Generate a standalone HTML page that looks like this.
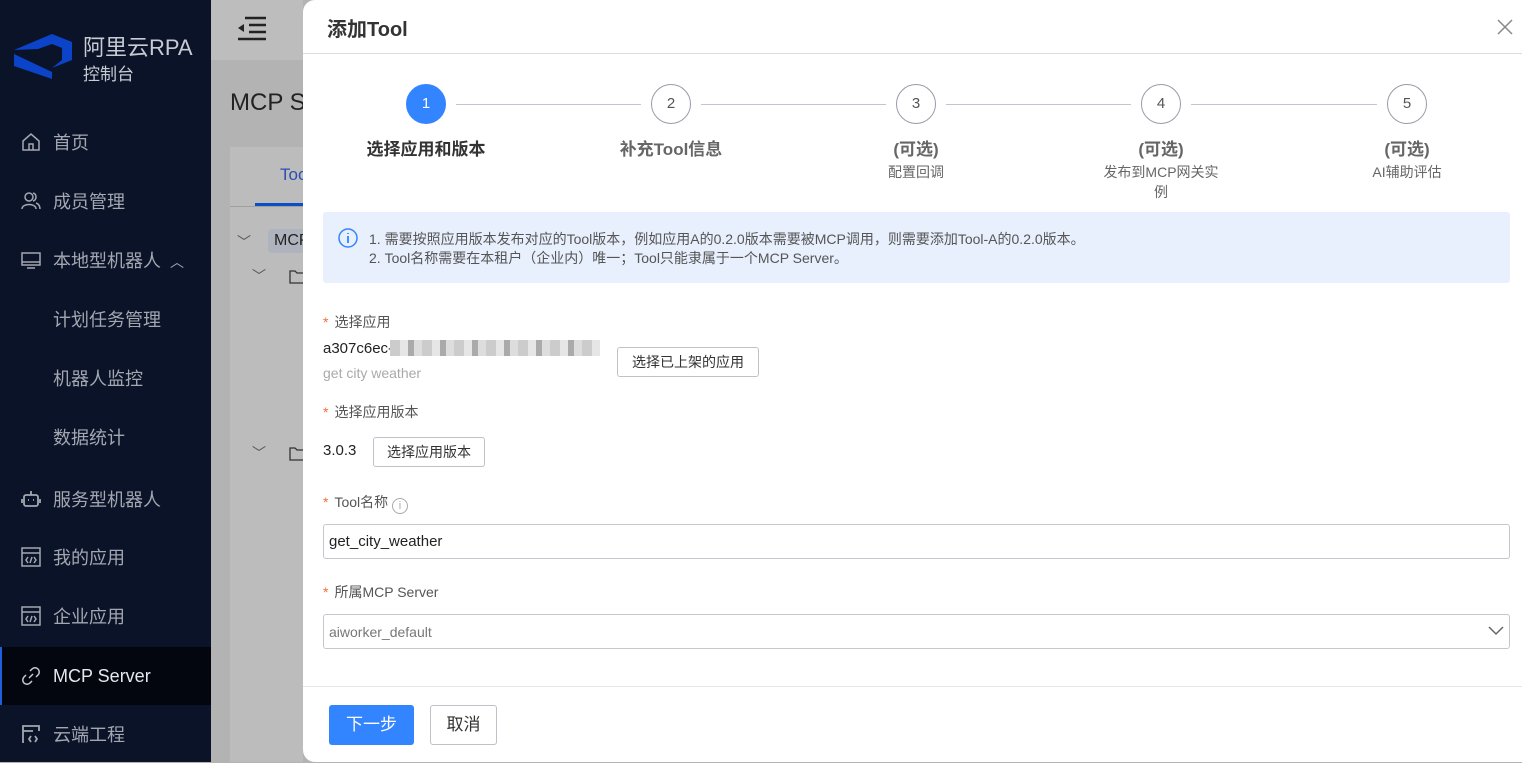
<!DOCTYPE html>
<html><head><meta charset="utf-8"><style>
*{box-sizing:border-box;margin:0;padding:0}
body{width:1522px;height:762px;overflow:hidden;position:relative;font-family:"Liberation Sans","Noto Sans CJK SC",sans-serif;background:#b3b3b3}
.abs{position:absolute}
#side{left:0;top:0;width:211px;height:762px;background:#0b1329}
.item{position:absolute;left:0;width:211px;height:58px;color:#a3a7b0;font-size:18px;display:flex;align-items:center}
.item svg{position:absolute;left:21px}
.item span{position:absolute;left:53px;white-space:nowrap}
#main{left:211px;top:0;width:92px;height:762px;overflow:hidden;white-space:nowrap}
#modal{left:303px;top:0;width:1219px;height:762px;background:#fff;border-top-left-radius:12px;border-bottom-left-radius:12px}
.circ{position:absolute;width:40px;height:40px;border-radius:50%;border:1px solid #9a9aa8;color:#555;font-size:15px;text-align:center;line-height:38px;background:#fff}
.line{position:absolute;top:104px;height:1px;background:#c4c4d0}
.st{position:absolute;width:200px;text-align:center;font-weight:bold;font-size:17px;color:#666}
.sub{position:absolute;width:130px;text-align:center;font-size:14px;color:#666;line-height:20px}
.lbl{position:absolute;left:323px;font-size:14px;color:#555}
.lbl b{color:#f56c3c;font-weight:normal;margin-right:6px}
.btn{position:absolute;border:1px solid #c0c0c8;border-radius:3px;background:#fff;font-size:14px;color:#333;text-align:center}
</style></head><body>
<div id="side" class="abs">
 <svg class="abs" style="left:14px;top:32px" width="58" height="48" viewBox="0 0 58 48"><path d="M0 18 L38 2 L58 10 L58 28 L38 36 L48 28 L48 16 Z" fill="#0b44c9"/><path d="M0 22 L0 34 L38 47 L38 40 Z" fill="#0b44c9"/><path d="M10 22 L38 12 L48 16 L20 24 Z" fill="#0b1329"/></svg>
 <div class="abs" style="left:83px;top:30px;color:#c8cbd2;font-size:22px">阿里云RPA</div>
 <div class="abs" style="left:83px;top:60px;color:#c8cbd2;font-size:17px">控制台</div>
 <div class="item" style="top:113px"><svg width="20" height="20" viewBox="0 0 20 20" fill="none" stroke="#a3a7b0" stroke-width="1.5"><path d="M2 9 L10 2 L18 9 V18 H2 Z M8 18 V12 H12 V18"/></svg><span>首页</span></div>
 <div class="item" style="top:172px"><svg width="20" height="20" viewBox="0 0 20 20" fill="none" stroke="#a3a7b0" stroke-width="1.5"><circle cx="8" cy="6" r="4"/><path d="M1 18 C1 12 15 12 15 18 M12 2 C16 3 16 9 12 10 M15 12 C18 13 19 15 19 18"/></svg><span>成员管理</span></div>
 <div class="item" style="top:231px"><svg width="20" height="20" viewBox="0 0 20 20" fill="none" stroke="#a3a7b0" stroke-width="1.5"><rect x="1" y="3" width="18" height="12"/><path d="M1 12 H19 M6 18 H14"/></svg><span>本地型机器人 <small style="font-size:14px;margin-left:4px">︿</small></span></div>
 <div class="item" style="top:290px"><span>计划任务管理</span></div>
 <div class="item" style="top:349px"><span>机器人监控</span></div>
 <div class="item" style="top:408px"><span>数据统计</span></div>
 <div class="item" style="top:470px"><svg width="20" height="20" viewBox="0 0 20 20" fill="none" stroke="#a3a7b0" stroke-width="1.8"><rect x="3" y="6" width="14" height="11" rx="2"/><path d="M10 2 V6 M7 11 H8 M12 11 H13 M1 10 V14 M19 10 V14"/></svg><span>服务型机器人</span></div>
 <div class="item" style="top:528px"><svg width="20" height="20" viewBox="0 0 20 20" fill="none" stroke="#a3a7b0" stroke-width="1.5"><rect x="1" y="1" width="18" height="18"/><path d="M1 6 H19 M7 10 L5 13 L7 16 M13 10 L15 13 L13 16 M11 10 L9 16"/></svg><span>我的应用</span></div>
 <div class="item" style="top:587px"><svg width="20" height="20" viewBox="0 0 20 20" fill="none" stroke="#a3a7b0" stroke-width="1.5"><rect x="1" y="1" width="18" height="18"/><path d="M1 6 H19 M7 10 L5 13 L7 16 M13 10 L15 13 L13 16 M11 10 L9 16"/></svg><span>企业应用</span></div>
 <div class="item" style="top:647px;background:#03060f;color:#e6e8ec;border-left:2px solid #1e5fe0"><svg width="20" height="20" viewBox="0 0 20 20" fill="none" stroke="#c8cbd2" stroke-width="1.5" style="left:19px"><path d="M8 12 L12 8 M9 5 L11 3 A3 3 0 0 1 17 9 L15 11 M11 15 L9 17 A3 3 0 0 1 3 11 L5 9"/></svg><span style="left:51px">MCP Server</span></div>
 <div class="item" style="top:705px"><svg width="20" height="20" viewBox="0 0 20 20" fill="none" stroke="#a3a7b0" stroke-width="1.8"><path d="M2 19 V2 H18 V7 M2 7 H12 M10 12 L8 15 L10 18 M14 12 L16 15 L14 18"/></svg><span>云端工程</span></div>
</div>
<div id="main" class="abs">
 <div class="abs" style="left:0;top:0;width:92px;height:60px;background:#bdbdbd"></div>
 <svg class="abs" style="left:26px;top:16px" width="30" height="26" viewBox="0 0 30 26" stroke="#222" stroke-width="2.5"><path d="M8 2 H29 M12 9 H29 M12 16 H29 M1 23 H29"/><path d="M1 12 L7 8 V16 Z" fill="#222" stroke="none"/></svg>
 <div class="abs" style="left:19px;top:89px;font-size:24px;color:#222">MCP Server</div>
 <div class="abs" style="left:19px;top:147px;width:80px;height:615px;background:#bcbcbc"></div>
 <div class="abs" style="left:19px;top:206px;width:80px;height:1px;background:#a0a0a0"></div>
 <div class="abs" style="left:44px;top:203px;width:50px;height:3px;background:#0b4fc4"></div>
 <div class="abs" style="left:69px;top:165px;font-size:17px;color:#2a4fb0">Tool</div>
 <div class="abs" style="left:26px;top:232px;font-size:14px;color:#555">﹀</div>
 <div class="abs" style="left:57px;top:229px;width:60px;height:24px;background:#aeb3be;border-radius:4px;font-size:16px;color:#222;padding:3px 6px">MCP</div>
 <div class="abs" style="left:41px;top:266px;font-size:14px;color:#555">﹀</div>
 <div class="abs" style="left:41px;top:443px;font-size:14px;color:#555">﹀</div>
 <svg class="abs" style="left:78px;top:268px" width="16" height="16"><path d="M1 3 H6 L8 5 H15 V15 H1 Z" fill="none" stroke="#333" stroke-width="1.3"/></svg>
 <svg class="abs" style="left:78px;top:445px" width="16" height="16"><path d="M1 3 H6 L8 5 H15 V15 H1 Z" fill="none" stroke="#333" stroke-width="1.3"/></svg>
</div>
<div id="modal" class="abs">
 <div class="abs" style="left:24px;top:13px;font-size:20px;font-weight:bold;color:#333">添加Tool</div>
 <svg class="abs" style="left:1194px;top:19px" width="16" height="16" stroke="#888" stroke-width="1.5"><path d="M1 1 L15 15 M15 1 L1 15"/></svg>
 <div class="abs" style="left:0;top:53px;width:1219px;height:1px;background:#dcdce2"></div>
</div>
<div class="line" style="left:456px;width:185px"></div>
<div class="line" style="left:701px;width:185px"></div>
<div class="line" style="left:946px;width:185px"></div>
<div class="line" style="left:1191px;width:186px"></div>
<div class="circ" style="left:406px;top:84px;background:#3384ff;border-color:#3384ff;color:#fff">1</div>
<div class="circ" style="left:651px;top:84px">2</div>
<div class="circ" style="left:896px;top:84px">3</div>
<div class="circ" style="left:1141px;top:84px">4</div>
<div class="circ" style="left:1387px;top:84px">5</div>
<div class="st" style="left:326px;top:135px;color:#333">选择应用和版本</div>
<div class="st" style="left:571px;top:135px">补充Tool信息</div>
<div class="st" style="left:816px;top:135px">(可选)</div>
<div class="st" style="left:1061px;top:135px">(可选)</div>
<div class="st" style="left:1307px;top:135px">(可选)</div>
<div class="sub" style="left:851px;top:162px">配置回调</div>
<div class="sub" style="left:1096px;top:162px">发布到MCP网关实<br>例</div>
<div class="sub" style="left:1342px;top:162px">AI辅助评估</div>
<div class="abs" style="left:323px;top:212px;width:1187px;height:71px;background:#e8effd;border-radius:3px"></div>
<svg class="abs" style="left:338px;top:228px" width="20" height="20" viewBox="0 0 20 20"><circle cx="10" cy="10" r="9" fill="none" stroke="#3384ff" stroke-width="1.5"/><path d="M10 8 V15 M10 5 V6" stroke="#3384ff" stroke-width="1.8"/></svg>
<div class="abs" style="left:369px;top:230px;font-size:14px;color:#555;line-height:19px">1. 需要按照应用版本发布对应的Tool版本，例如应用A的0.2.0版本需要被MCP调用，则需要添加Tool-A的0.2.0版本。<br>2. Tool名称需要在本租户（企业内）唯一；Tool只能隶属于一个MCP Server。</div>
<div class="lbl" style="top:312px"><b>*</b>选择应用</div>
<div class="abs" style="left:323px;top:340px;font-size:15px;color:#222">a307c6ec-</div>
<div class="abs" style="left:390px;top:340px;width:210px;height:16px;background:repeating-linear-gradient(90deg,#ccc 0 10px,#e6e6e6 10px 18px,#aaa 18px 24px,#ddd 24px 32px)"></div>
<div class="abs" style="left:323px;top:365px;font-size:14px;color:#aaa">get city weather</div>
<div class="btn" style="left:617px;top:347px;width:142px;height:30px;line-height:28px">选择已上架的应用</div>
<div class="lbl" style="top:402px"><b>*</b>选择应用版本</div>
<div class="abs" style="left:323px;top:442px;font-size:15px;color:#222">3.0.3</div>
<div class="btn" style="left:373px;top:437px;width:112px;height:30px;line-height:28px">选择应用版本</div>
<div class="lbl" style="top:492px"><b>*</b>Tool名称 <span style="display:inline-block;width:16px;height:16px;border:1px solid #aaa;border-radius:50%;font-size:11px;text-align:center;line-height:14px;color:#aaa;vertical-align:-2px">i</span></div>
<div class="abs" style="left:323px;top:524px;width:1187px;height:35px;border:1px solid #c6c6ce;border-radius:3px;font-size:15px;color:#222;padding:8px 5px">get_city_weather</div>
<div class="lbl" style="top:582px"><b>*</b>所属MCP Server</div>
<div class="abs" style="left:323px;top:614px;width:1187px;height:35px;border:1px solid #c6c6ce;border-radius:3px;font-size:14px;color:#777;padding:9px 5px">aiworker_default</div>
<svg class="abs" style="left:1488px;top:625px" width="16" height="12" stroke="#666" stroke-width="1.5" fill="none"><path d="M1 2 L8 9 L15 2"/></svg>
<div class="abs" style="left:303px;top:686px;width:1219px;height:1px;background:#e6e6ea"></div>
<div class="abs" style="left:329px;top:705px;width:85px;height:40px;background:#3384ff;border-radius:3px;color:#fff;font-size:17px;text-align:center;line-height:40px">下一步</div>
<div class="btn" style="left:430px;top:705px;width:67px;height:40px;line-height:38px;font-size:17px">取消</div>
</body></html>
